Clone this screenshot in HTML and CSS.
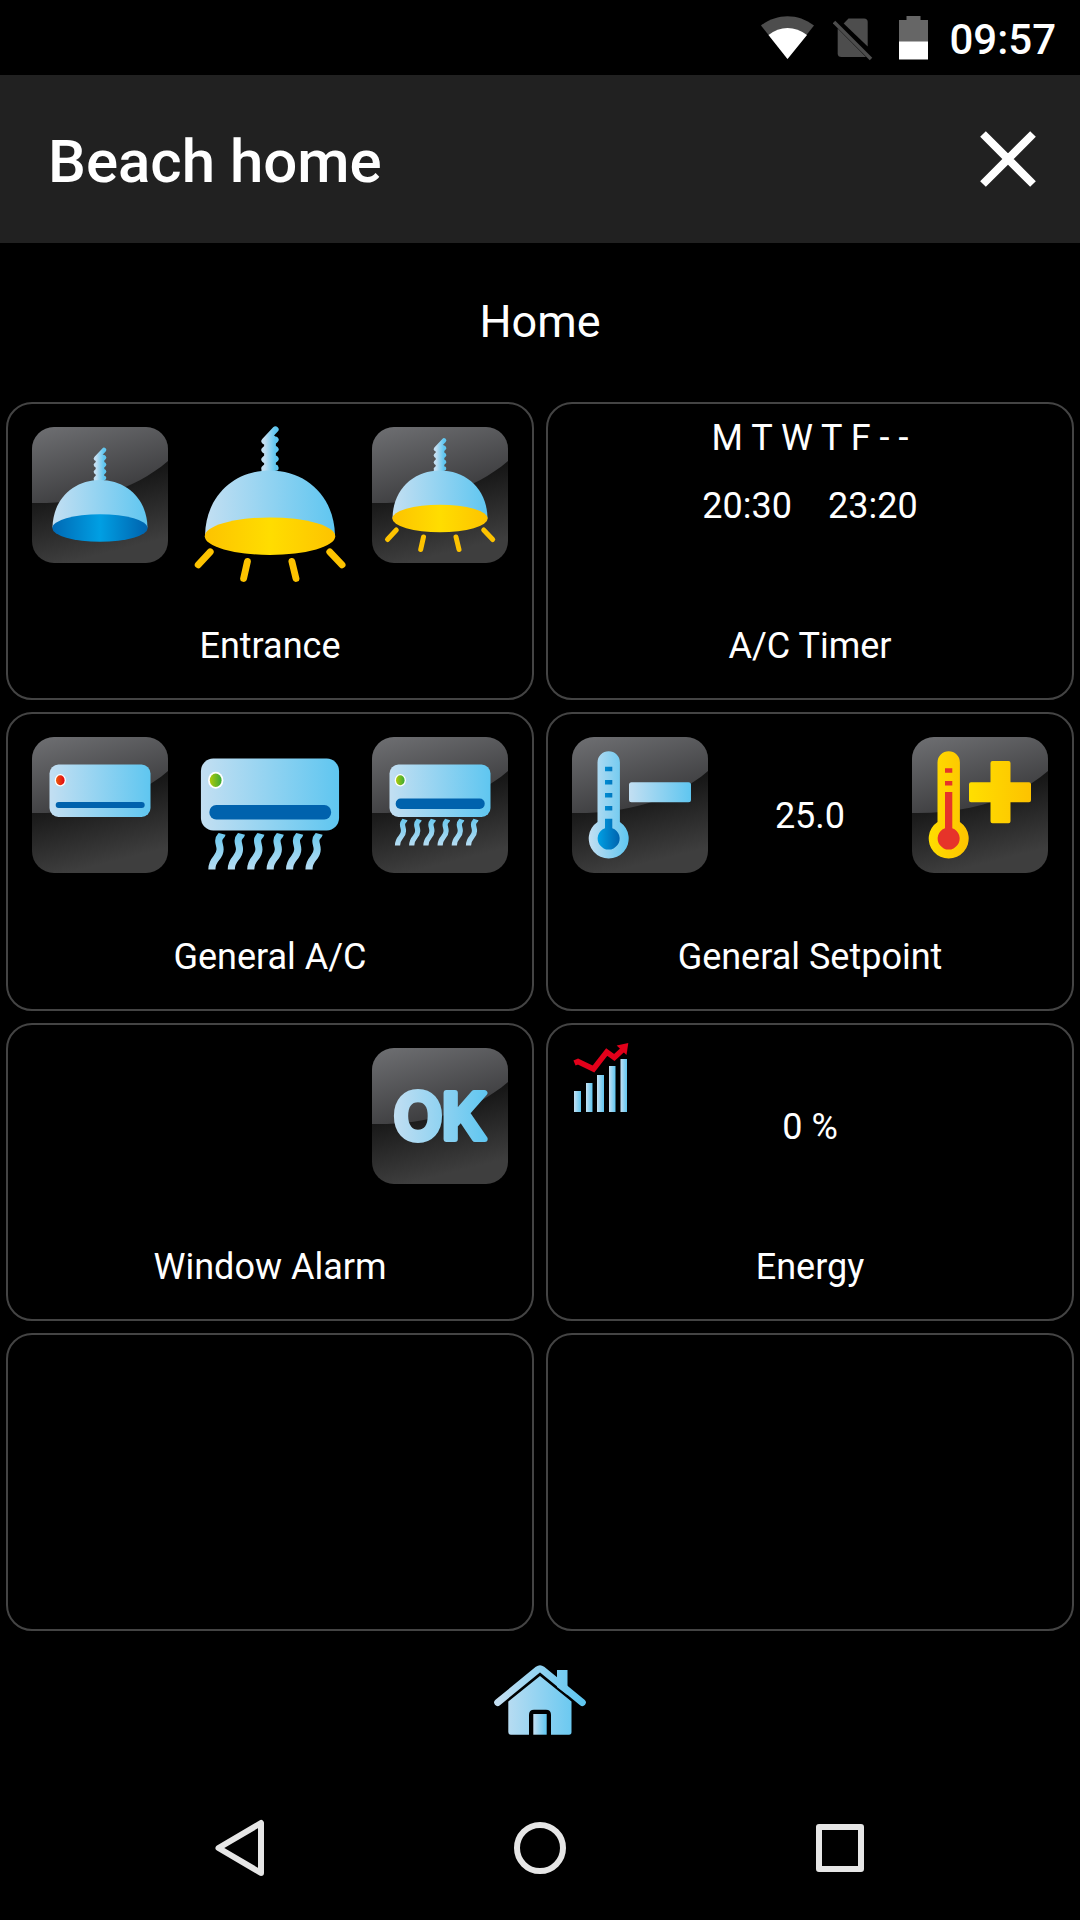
FILE: index.html
```html
<!DOCTYPE html>
<html lang="en">
<head>
    <meta charset="UTF-8"/>
    <meta name="viewport" content="width=device-width, initial-scale=1.0">
    <title>Beach home</title>
    <link rel="stylesheet" href="styles.css">
</head>
<body>
    <!-- shared gradients and icons -->
    <svg class="sprite" aria-hidden="true">
        <defs>
            <linearGradient id="sky"><stop offset="0" stop-color="#c3dff2"/><stop offset="1" stop-color="#5fc6f0"/></linearGradient>
            <linearGradient id="skyText" gradientUnits="userSpaceOnUse" x1="20" y1="0" x2="116" y2="0"><stop offset="0" stop-color="#c3dff2"/><stop offset="1" stop-color="#5fc6f0"/></linearGradient>
            <linearGradient id="skyHome" gradientUnits="userSpaceOnUse" x1="4" y1="0" x2="88" y2="0"><stop offset="0" stop-color="#c3dff2"/><stop offset="1" stop-color="#5fc6f0"/></linearGradient>
            <linearGradient id="skyAir" gradientUnits="userSpaceOnUse" x1="0" y1="108" x2="0" y2="82"><stop offset="0" stop-color="#b4dcf2"/><stop offset="1" stop-color="#6cc9ee"/></linearGradient>
            <linearGradient id="deep"><stop offset="0" stop-color="#0069b4"/><stop offset=".5" stop-color="#009fe3"/><stop offset="1" stop-color="#0062ad"/></linearGradient>
            <linearGradient id="mercury" gradientUnits="userSpaceOnUse" x1="26" y1="0" x2="48" y2="0"><stop offset="0" stop-color="#009fe3"/><stop offset="1" stop-color="#0062ad"/></linearGradient>
            <linearGradient id="glow"><stop offset="0" stop-color="#fdc300"/><stop offset=".5" stop-color="#ffdd00"/><stop offset="1" stop-color="#fdc300"/></linearGradient>
            <linearGradient id="gold"><stop offset="0" stop-color="#ffde00"/><stop offset="1" stop-color="#fdc300"/></linearGradient>
            <linearGradient id="red"><stop offset="0" stop-color="#ea5b0c"/><stop offset="1" stop-color="#e30613"/></linearGradient>
            <linearGradient id="green"><stop offset="0" stop-color="#afca0b"/><stop offset="1" stop-color="#3aaa35"/></linearGradient>
            <linearGradient id="tileBase" x1="0" y1="0" x2=".25" y2="1"><stop offset=".45" stop-color="#121212"/><stop offset="1" stop-color="#3e3e3e"/></linearGradient>
            <linearGradient id="tileShine" x1="0" y1="0" x2=".5" y2="1"><stop offset="0" stop-color="#6f7073"/><stop offset="1" stop-color="#39393b"/></linearGradient>
        </defs>
        <symbol id="gloss" viewBox="0 0 136 136">
            <rect width="136" height="136" fill="url(#tileBase)"/>
            <path fill="url(#tileShine)" d="M0 0H136V34C100 65 50 77 0 76Z"/>
        </symbol>
        <symbol id="lampBody" viewBox="0 0 136 136">
            <path fill="url(#sky)" stroke="url(#sky)" stroke-width="4.600" stroke-linecap="round" stroke-linejoin="round" d="M64 22L72 13.500M64 28.500L72 21M64 35.500L72 28M64 42L72 35M64 43L72 41.500M66 24L70 20V43H66Z"/>
            <path fill="url(#sky)" d="M20.500 91C21 62 42 43.500 68 43.500S115 62 115.500 91Z"/>
        </symbol>
        <symbol id="lampOff" viewBox="0 0 136 136">
            <use href="#lampBody" y="9.500" width="136" height="136"/>
            <ellipse cx="68" cy="101" rx="47.700" ry="13.700" fill="url(#deep)"/>
        </symbol>
        <symbol id="lampOn" viewBox="0 0 136 136">
            <use href="#lampBody" width="136" height="136"/>
            <ellipse cx="68" cy="91.500" rx="47.700" ry="13.700" fill="url(#glow)"/>
            <path fill="none" stroke="#fdc300" stroke-width="5" stroke-linecap="round" d="M24.300 103L15.500 112.500M51.500 110L48.700 122.500M84 110L87 122.500M111.700 103L120.700 112.500"/>
        </symbol>
        <symbol id="acOff" viewBox="0 0 136 136">
            <rect x="17.500" y="27.500" width="101" height="52.500" rx="9" fill="url(#sky)"/>
            <ellipse cx="28.300" cy="43.300" rx="5.600" ry="6.200" fill="#fff"/>
            <ellipse cx="28.300" cy="43.300" rx="4.300" ry="5" fill="url(#red)"/>
            <rect x="23.700" y="65" width="89" height="6" rx="3" fill="#0062ad"/>
        </symbol>
        <symbol id="acOn" viewBox="0 0 136 136">
            <rect x="17.500" y="27.500" width="101" height="52.500" rx="9" fill="url(#sky)"/>
            <ellipse cx="28.300" cy="43.300" rx="5.600" ry="6.200" fill="#fff"/>
            <ellipse cx="28.300" cy="43.300" rx="4.300" ry="5" fill="url(#green)"/>
            <rect x="23.700" y="61.500" width="89" height="10.500" rx="5" fill="#0062ad"/>
            <path fill="none" stroke="url(#skyAir)" stroke-width="5.200" d="M25.500 108.500c0-8.500 6-8 6-14.500 0-3-1-4-1-6.500 0-3 2-3 2.500-5M39.700 108.500c0-8.500 6-8 6-14.500 0-3-1-4-1-6.500 0-3 2-3 2.500-5M53.900 108.500c0-8.500 6-8 6-14.500 0-3-1-4-1-6.500 0-3 2-3 2.500-5M68.100 108.500c0-8.500 6-8 6-14.500 0-3-1-4-1-6.500 0-3 2-3 2.500-5M82.300 108.500c0-8.500 6-8 6-14.500 0-3-1-4-1-6.500 0-3 2-3 2.500-5M96.500 108.500c0-8.500 6-8 6-14.500 0-3-1-4-1-6.500 0-3 2-3 2.500-5"/>
        </symbol>
    </svg>

    <div class="status-bar">
        <svg class="wifi" viewBox="0 0 54 48" aria-hidden="true">
            <path fill="#4d4d4d" d="M0 9.500C16-3 37-3 53 9.500L26.500 43Z"/>
            <path fill="#fff" d="M7.500 19C19 9.500 34 9.500 46 19L26.500 43Z"/>
        </svg>
        <svg class="sim" viewBox="0 0 48 48" aria-hidden="true">
            <path fill="#4d4d4d" d="M15.500 2.500H31Q34.700 2.500 34.700 6V30.500L10.700 7.500Z"/>
            <path fill="#4d4d4d" d="M4.700 12.500L33 41H8.500Q4.700 41 4.700 37.500Z"/>
            <path stroke="#4d4d4d" stroke-width="3.500" d="M1 6L38 43"/>
        </svg>
        <svg class="battery" viewBox="0 0 32 48" aria-hidden="true">
            <path fill="#666" d="M7.500 0H21.500V4H29V26H0V4H7.500Z"/>
            <path fill="#fff" d="M0 25.500H29V43.500H0Z"/>
        </svg>
        <time>09:57</time>
    </div>

    <header class="app-header">
        <h1>Beach home</h1>
        <button class="close" aria-label="Close">
            <svg viewBox="0 0 56 56"><path stroke="#fff" stroke-width="8" d="M3 3L53 53M53 3L3 53"/></svg>
        </button>
    </header>

    <h2 class="page-name">Home</h2>

    <main class="grid">
        <section class="card">
            <div class="controls">
                <button class="tile" aria-label="Light off">
                    <svg viewBox="0 0 136 136"><use href="#gloss"/><use href="#lampOff"/></svg>
                </button>
                <svg class="state" viewBox="0 0 136 136" aria-hidden="true"><use href="#lampOn"/></svg>
                <button class="tile" aria-label="Light on">
                    <svg viewBox="0 0 136 136"><use href="#gloss"/><use href="#lampOn"/></svg>
                </button>
            </div>
            <h3>Entrance</h3>
        </section>

        <section class="card">
            <div class="timer">
                <p>M T W T F - -</p>
                <p class="hours"><time>20:30</time><time>23:20</time></p>
            </div>
            <h3>A/C Timer</h3>
        </section>

        <section class="card">
            <div class="controls">
                <button class="tile" aria-label="A/C off">
                    <svg viewBox="0 0 136 136"><use href="#gloss"/><use href="#acOff"/></svg>
                </button>
                <svg class="state" viewBox="0 0 136 136" aria-hidden="true"><use href="#acOn"/></svg>
                <button class="tile" aria-label="A/C on">
                    <svg viewBox="0 0 136 136"><use href="#gloss"/><use href="#acOn"/></svg>
                </button>
            </div>
            <h3>General A/C</h3>
        </section>

        <section class="card">
            <div class="controls">
                <button class="tile" aria-label="Lower temperature">
                    <svg viewBox="0 0 136 136">
                        <use href="#gloss"/>
                        <path fill="url(#sky)" d="M25.500 25.500a11.200 11.200 0 0 1 22.400 0V85a20 20 0 1 1-22.400 0Z"/>
                        <path fill="url(#mercury)" d="M33 29.700h7.300v4.600H33ZM33 43h7.300v4.500H33ZM33 56h7.300v4.500H33ZM33 69h7.300v4.500H33ZM33 81.700h7.300v9.500a11 11 0 1 1-7.300 0Z"/>
                        <rect x="57" y="45.300" width="62" height="20" rx="2.500" fill="url(#sky)"/>
                    </svg>
                </button>
                <p class="value">25.0</p>
                <button class="tile" aria-label="Raise temperature">
                    <svg viewBox="0 0 136 136">
                        <use href="#gloss"/>
                        <path fill="url(#gold)" d="M25.500 25.500a11.200 11.200 0 0 1 22.400 0V85a20 20 0 1 1-22.400 0Z"/>
                        <path fill="#e6332a" d="M33 31.300h7.300v4.500H33ZM33 44h7.300v4.500H33ZM33 55h7.300v36.200a11 11 0 1 1-7.300 0Z"/>
                        <path fill="url(#gold)" stroke="url(#gold)" stroke-width="4" stroke-linejoin="round" d="M80.500 26h16v21.300H117v16H96.500v21h-16v-21H59v-16h21.500Z"/>
                    </svg>
                </button>
            </div>
            <h3>General Setpoint</h3>
        </section>

        <section class="card">
            <div class="controls">
                <button class="tile last">
                    <svg viewBox="0 0 136 136">
                        <use href="#gloss"/>
                        <text class="ok" x="68" y="91" text-anchor="middle">OK</text>
                    </svg>
                </button>
            </div>
            <h3>Window Alarm</h3>
        </section>

        <section class="card">
            <div class="controls">
                <svg class="chart" viewBox="0 0 58 72" aria-hidden="true">
                    <rect x="2" y="50" width="7" height="21" fill="url(#sky)"/>
                    <rect x="14" y="42" width="6.500" height="29" fill="url(#sky)"/>
                    <rect x="25" y="34" width="7" height="37" fill="url(#sky)"/>
                    <rect x="37" y="25" width="6.500" height="46" fill="url(#sky)"/>
                    <rect x="48.500" y="18" width="6.500" height="53" fill="url(#sky)"/>
                    <path fill="none" stroke="#e2001a" stroke-width="5.500" d="M2.500 22L6 20.500L21.500 28L34.700 11L42.300 16.500L51 8.500"/>
                    <path fill="#e2001a" d="M56.300 2L44.700 4.500L54.500 14Z"/>
                </svg>
                <p class="value">0 %</p>
            </div>
            <h3>Energy</h3>
        </section>

        <section class="card"></section>
        <section class="card"></section>
    </main>

    <footer class="app-footer">
        <button aria-label="Home page">
            <svg viewBox="0 0 92 70">
                <path fill="url(#skyHome)" d="M63 5H73.500V30L63 22ZM46 11L77.500 36.500V67Q77.500 69.700 75 69.700H17Q14.300 69.700 14.300 67V36.500Z"/>
                <path fill="none" stroke="url(#skyHome)" stroke-width="7" stroke-linecap="round" stroke-linejoin="round" d="M3.700 37.500L44 4.500Q46 3 48 4.500L88.300 37.500"/>
                <path fill="#000" d="M35 70V50Q35 44.700 40 44.700H52Q57 44.700 57 50V70Z"/>
                <rect x="39.300" y="49" width="13.400" height="20.700" fill="url(#sky)"/>
            </svg>
        </button>
    </footer>

    <nav class="system-nav">
        <button aria-label="Back">
            <svg viewBox="0 0 60 60"><path d="M51 5V55L8.500 30Z"/></svg>
        </button>
        <button aria-label="Home">
            <svg viewBox="0 0 60 60"><circle cx="30" cy="30" r="23"/></svg>
        </button>
        <button aria-label="Recent apps">
            <svg viewBox="0 0 60 60"><rect x="9" y="9" width="42" height="42"/></svg>
        </button>
    </nav>
</body>
</html>
```
FILE: styles.css
```css
* {
    margin: 0;
    padding: 0;
    box-sizing: border-box;
}
body {
    min-height: 100vh;
    display: flex;
    flex-direction: column;
    background-color: #000000;
    color: #ffffff;
    font-family: Roboto, "Liberation Sans", sans-serif;
    font-size: 36px;
    line-height: 68px;
}
button {
    background: none;
    border: none;
    cursor: pointer;
}
svg {
    display: block;
}
.sprite {
    position: absolute;
    width: 0;
    height: 0;
}
.status-bar {
    height: 75px;
    padding: 4px 24px 0 0;
    display: flex;
    justify-content: flex-end;
    align-items: center;
    gap: 18px;
    font-size: 42px;
    font-weight: 500;
}
.status-bar svg {
    height: 48px;
}
.wifi {
    width: 54px;
}
.sim {
    width: 48px;
}
.battery {
    width: 32px;
}
.app-header {
    height: 168px;
    padding: 0 44px 0 48px;
    display: flex;
    justify-content: space-between;
    align-items: center;
    background-color: #212121;
}
h1 {
    padding-top: 6px;
    font-size: 60px;
    font-weight: 500;
}
.close svg {
    width: 56px;
    height: 56px;
}
.page-name {
    padding-bottom: 2px;
    font-size: 45px;
    font-weight: 400;
    line-height: 157px;
    text-align: center;
}
.grid {
    flex: 1;
    padding: 0 6px;
    display: grid;
    grid-template-columns: 1fr 1fr;
    grid-auto-rows: minmax(298px, 1fr);
    gap: 12px;
}
.card {
    display: flex;
    flex-direction: column;
    justify-content: space-between;
    border: 2px solid #444444;
    border-radius: 26px;
    text-align: center;
}
.card h3 {
    font-size: 36px;
    font-weight: 400;
    line-height: 103px;
}
.controls {
    height: 190px;
    padding: 0 24px;
    display: grid;
    grid-template-columns: 136px 1fr 136px;
    justify-items: center;
    align-items: start;
}
.tile {
    width: 136px;
    height: 136px;
    margin-top: 23px;
    border-radius: 22px;
    overflow: hidden;
}
.tile.last {
    grid-column: 3;
}
.state {
    width: 186px;
    height: 186px;
    margin-top: 7px;
}
.value {
    margin-top: 68px;
}
.hours {
    display: flex;
    justify-content: center;
    gap: 36px;
}
.chart {
    width: 58px;
    height: 72px;
    margin-top: 16px;
    justify-self: start;
}
.ok {
    font-family: Inter, sans-serif;
    font-size: 63px;
    font-weight: 600;
    fill: url(#skyText);
    stroke: url(#skyText);
    stroke-width: 6px;
    stroke-linejoin: round;
}
.app-footer {
    height: 145px;
    padding-top: 34px;
    display: flex;
    justify-content: center;
    align-items: flex-start;
}
.app-footer svg {
    width: 92px;
    height: 70px;
}
.system-nav {
    height: 144px;
    padding: 0 90px;
    display: flex;
    justify-content: space-around;
    align-items: center;
}
.system-nav svg {
    width: 60px;
    height: 60px;
    fill: none;
    stroke: #e6e6e6;
    stroke-width: 6px;
    stroke-linejoin: round;
}
```
